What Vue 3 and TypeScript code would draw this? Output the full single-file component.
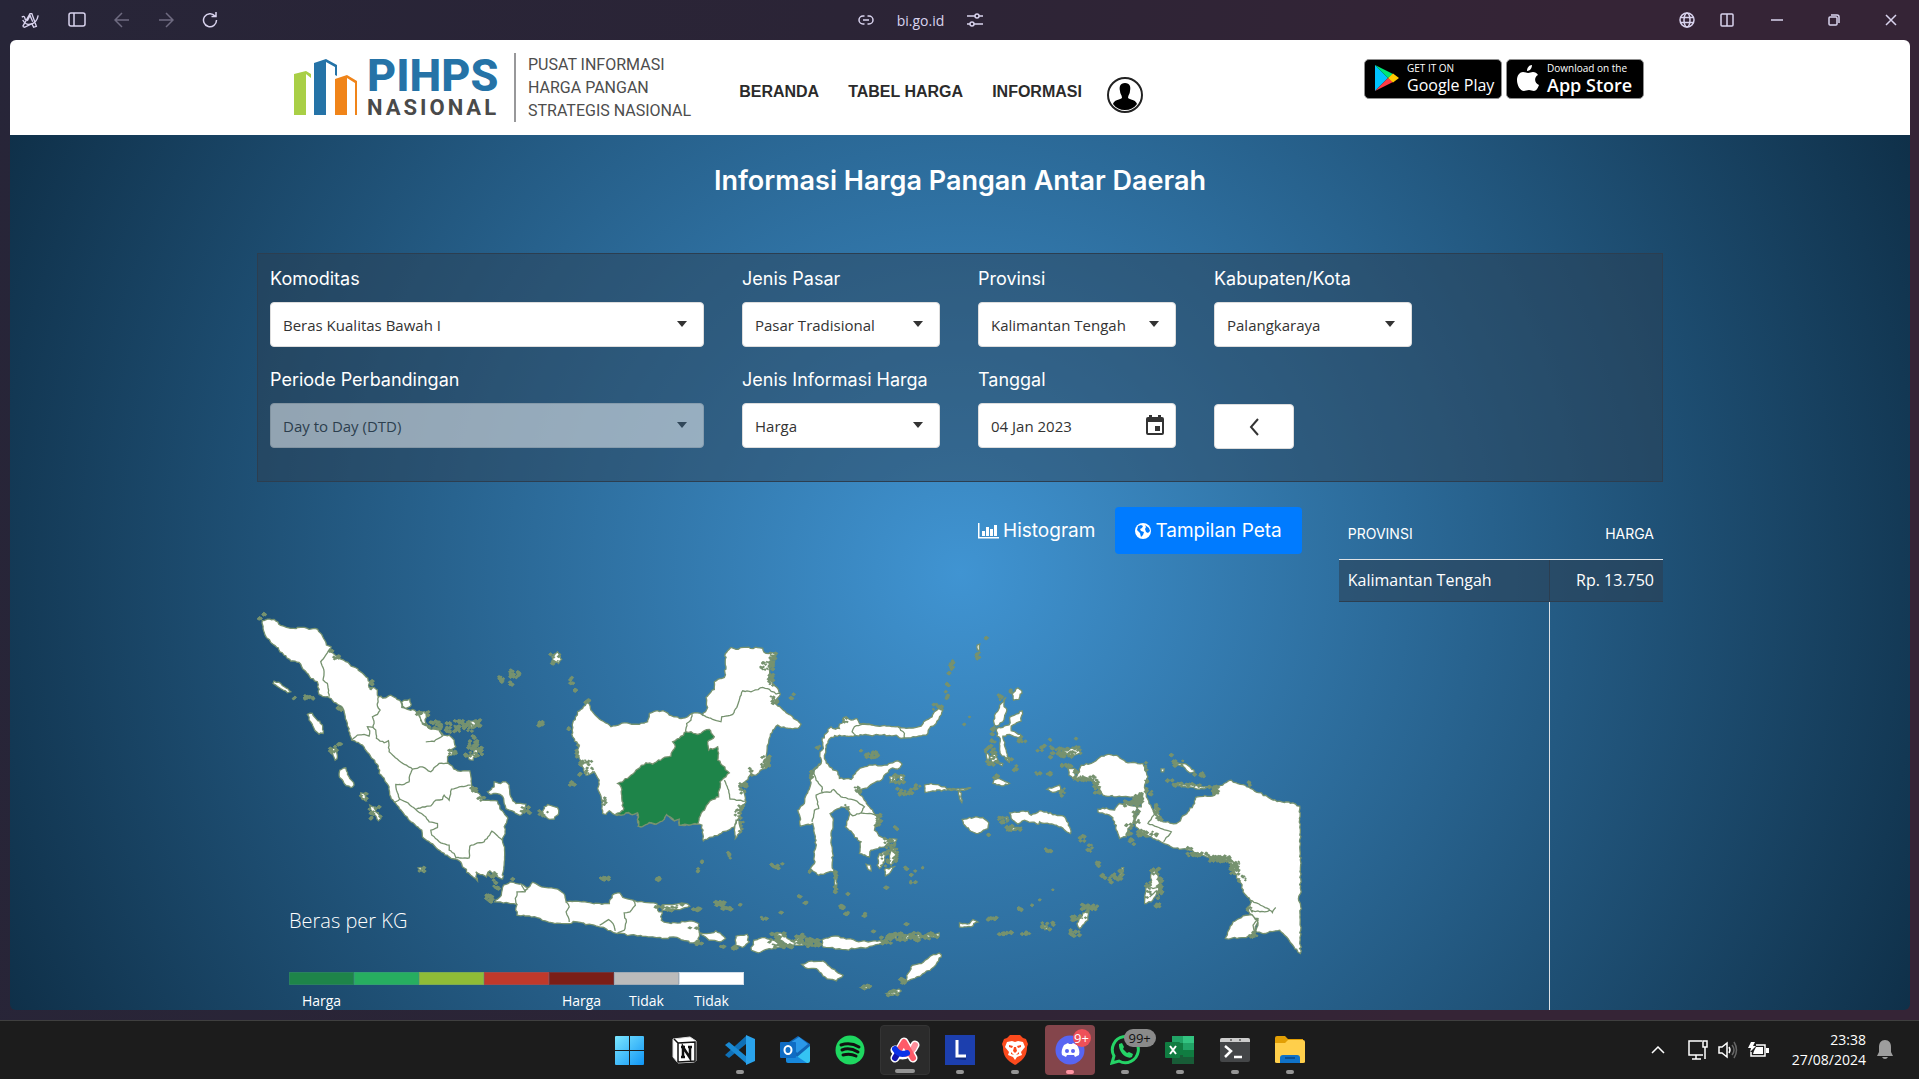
<script setup lang="ts">
import { ref } from 'vue'

interface Layer {
  transform: string
  land: string[]
  borders: string[]
  specks: number[][]
}

const komoditas = ref('Beras Kualitas Bawah I')
const pasar = ref('Pasar Tradisional')
const provinsi = ref('Kalimantan Tengah')
const kota = ref('Palangkaraya')
const periode = ref('Day to Day (DTD)')
const informasi = ref('Harga')
const tanggal = ref('04 Jan 2023')

const legend = [
  { color: '#1e8449', label: 'Harga' },
  { color: '#27ae60', label: '' },
  { color: '#8fbc37', label: '' },
  { color: '#c0392b', label: '' },
  { color: '#7b1e17', label: 'Harga' },
  { color: '#bbbbbb', label: 'Tidak' },
  { color: '#ffffff', label: 'Tidak' },
]

// Deterministic noise keeps the coastline identical between renders
let seed = 7
function noise(): number {
  seed = (seed * 16807) % 2147483647
  return seed / 2147483647
}

function trace(points: string, closed: boolean, rough = 2.6): string {
  const p = points.split(' ').map((s) => s.split(',').map(Number))
  if (closed) p.push(p[0])
  let d = `M${p[0][0]} ${p[0][1]}`
  for (let i = 1; i < p.length; i++) {
    const [ax, ay] = p[i - 1]
    const [bx, by] = p[i]
    const steps = Math.max(1, Math.round(Math.hypot(bx - ax, by - ay) / 7))
    for (let s = 1; s <= steps; s++) {
      const t = s / steps
      const k = s === steps ? 0 : rough
      const x = ax + (bx - ax) * t + (noise() - 0.5) * 2 * k
      const y = ay + (by - ay) * t + (noise() - 0.5) * 2 * k
      d += `L${x.toFixed(1)} ${y.toFixed(1)}`
    }
  }
  return closed ? d + 'Z' : d
}

// Each cluster: centre x, centre y, spread x, spread y, islet count
function scatter(clusters: number[][]): string {
  let d = ''
  for (const [cx, cy, rx, ry, n] of clusters) {
    for (let i = 0; i < n; i++) {
      const x = cx + (noise() - 0.5) * 2 * rx
      const y = cy + (noise() - 0.5) * 2 * ry
      const r = 3 + noise() * 3
      d += `M${(x - r).toFixed(1)} ${y.toFixed(1)}l${r.toFixed(1)} ${(-r).toFixed(1)}l${(r * 1.3).toFixed(1)} ${(r * 0.8).toFixed(1)}l${(-r).toFixed(1)} ${(r * 1.1).toFixed(1)}Z`
    }
  }
  return d
}

const source: Layer[] = [
  {
    transform: 'translate(250 600) scale(.33333)',
    land: [
      '40,62 55,57 75,58 95,76 125,85 160,82 185,87 198,85 215,100 228,122 232,135 246,140 243,155 265,170 290,185 320,203 350,230 362,245 360,262 375,262 385,270 388,290 410,293 425,285 440,293 455,305 458,322 475,328 490,328 510,345 520,372 540,385 570,390 582,405 600,405 615,420 620,440 600,450 620,460 595,470 595,485 600,492 625,512 662,512 667,550 670,572 690,580 700,600 745,603 752,625 765,640 776,655 765,680 768,700 760,720 766,750 760,836 745,830 722,812 712,830 680,815 685,842 665,825 640,800 628,780 600,770 560,742 520,710 518,690 480,660 460,635 435,605 425,590 420,560 400,530 390,520 388,498 350,450 340,435 308,420 295,370 285,335 280,322 240,293 210,283 205,245 185,235 150,187 125,183 90,150 52,112 42,85',
      '458,306 465,300 482,297 486,315 470,325 460,318',
      '505,335 530,338 532,352 528,362 538,378 520,368',
      '715,575 735,560 735,545 750,550 770,545 780,555 785,590 800,610 830,612 820,640 810,645 795,635 770,625 765,610 760,588 740,580 725,583',
      '885,620 895,613 925,622 928,640 915,657 895,655 880,645',
      '175,343 190,340 200,355 220,375 222,400 210,402 195,385 185,365',
      '75,243 95,250 125,275 115,278 90,262 72,250',
      '272,510 290,503 300,530 315,555 305,562 285,550 270,525',
      '250,445 260,445 265,470 258,480 252,465',
      '335,578 345,580 352,602 340,595',
      '362,615 375,620 380,635 395,655 388,662 370,635',
      '507,803 525,805 525,815 512,810',
      '908,170 925,155 937,178 928,190 910,182',
      '660,362 678,360 680,380 668,385',
      '655,468 672,462 675,450 690,445 672,480 660,478',
    ],
    borders: [
      '243,145 230,165 215,185 225,215 222,240 235,250 240,290',
      '388,290 385,318 393,330 385,343 370,350 375,370 372,382',
      '308,420 325,405 345,403 360,408 362,392 355,380 372,382',
      '372,382 380,390 382,415 405,428 418,422 420,455 450,482 490,507',
      '490,507 520,500 545,515 570,490 600,490',
      '490,507 482,525 480,545 465,553 440,553 442,570 452,597 435,607',
      '452,597 470,605 500,628 520,620 545,617 560,600 580,598 585,585 600,600 607,567 630,560 665,555',
      '500,628 530,650 540,665 565,670 565,682 545,690 548,705 575,728 600,735 600,750 615,760 620,772 660,773 662,738 685,728 705,725 728,693 760,720',
      '530,425 555,424 580,408 570,392',
    ],
    specks: [
      [43, 42, 5, 4, 4], [32, 53, 4, 5, 3], [245, 148, 6, 8, 5], [265, 173, 14, 5, 8],
      [365, 255, 6, 14, 6], [180, 292, 13, 8, 10], [135, 294, 4, 4, 3], [268, 327, 12, 4, 6],
      [252, 450, 10, 12, 8], [272, 431, 9, 2, 4], [345, 590, 10, 12, 7], [378, 640, 18, 20, 12],
      [795, 220, 14, 15, 20], [755, 237, 9, 9, 9], [787, 250, 6, 4, 3], [917, 180, 15, 20, 12],
      [555, 375, 22, 12, 18], [598, 382, 8, 18, 14], [640, 378, 30, 16, 44], [680, 372, 13, 13, 12],
      [670, 428, 14, 22, 22], [682, 455, 20, 14, 16], [655, 468, 8, 8, 6], [610, 460, 12, 10, 9],
      [672, 568, 10, 8, 9], [695, 597, 12, 5, 8], [875, 372, 7, 5, 5], [830, 632, 16, 12, 10],
      [880, 640, 16, 12, 9], [520, 340, 18, 7, 8], [730, 822, 14, 8, 8], [735, 850, 6, 12, 4],
      [720, 890, 10, 6, 7], [516, 808, 8, 6, 5], [790, 842, 5, 5, 2],
    ],
  },
  {
    transform: 'translate(480 620) scale(.33333)',
    land: [
      '320,248 330,252 335,270 360,297 395,320 435,308 480,313 505,305 510,280 535,272 558,275 570,285 600,295 625,290 638,280 655,278 670,285 685,262 680,232 705,208 705,185 715,178 735,172 740,140 738,100 745,92 755,82 770,88 800,82 850,85 860,100 880,98 890,105 870,125 870,150 870,180 890,200 903,222 890,240 890,252 965,312 955,325 905,322 895,315 880,330 868,365 862,400 860,440 830,465 815,460 800,482 778,497 795,520 800,545 785,560 780,590 765,620 720,642 672,662 668,615 652,612 600,615 600,597 585,602 562,583 555,597 530,612 510,607 485,620 477,618 475,578 465,582 440,578 425,585 405,583 390,572 380,583 370,580 370,545 355,505 360,480 345,455 320,465 310,440 300,415 295,390 300,378 280,350 280,310 295,275 310,265',
      '770,600 780,605 785,635 768,655 765,630',
    ],
    borders: [
      '638,280 635,300 622,310 620,335',
      '670,285 700,298 725,305 727,290 760,283 775,255 790,212 815,215 850,202 870,208 890,222 903,220',
      '735,480 748,510 752,537 798,543',
      '372,545 380,540 376,555 368,552',
    ],
    specks: [
      [862, 138, 20, 12, 30], [882, 112, 12, 16, 16], [874, 178, 8, 18, 18], [885, 240, 11, 11, 20],
      [858, 425, 12, 16, 34], [790, 505, 11, 15, 16], [778, 575, 12, 18, 14], [785, 615, 6, 22, 9],
      [320, 428, 18, 8, 18], [330, 452, 12, 8, 8], [278, 490, 12, 6, 7], [302, 465, 4, 4, 2],
      [277, 182, 5, 10, 4], [287, 210, 8, 3, 4], [325, 245, 7, 7, 6], [267, 325, 3, 3, 2],
      [938, 228, 5, 8, 4], [185, 311, 6, 5, 4], [295, 395, 5, 20, 6], [812, 455, 5, 10, 6],
      [748, 705, 7, 10, 5], [656, 752, 4, 7, 3], [668, 727, 2, 4, 2], [375, 774, 13, 4, 5],
      [536, 774, 6, 4, 4], [877, 735, 2, 2, 1], [896, 746, 3, 3, 2], [910, 730, 2, 2, 1], [375, 545, 6, 12, 6],
    ],
  },
  {
    transform: 'translate(770 620) scale(.33333)',
    land: [
      '520,270 508,265 495,275 488,290 470,300 455,318 440,322 410,325 380,320 350,318 310,315 270,310 262,295 245,300 230,290 222,293 225,305 210,312 210,325 190,325 185,320 170,340 158,362 162,385 152,395 155,430 135,450 125,465 122,500 108,530 105,550 85,570 92,590 93,618 130,610 135,640 140,660 135,700 135,730 123,745 148,765 170,758 192,755 188,735 190,700 185,660 192,600 182,580 215,560 238,560 240,585 232,610 228,620 250,640 265,660 275,665 270,700 300,710 305,690 345,680 360,665 335,650 315,630 318,615 330,595 315,580 300,560 290,545 265,515 285,505 310,490 335,480 350,460 365,445 385,447 398,432 385,422 370,428 345,435 310,435 280,442 260,455 245,478 210,475 205,455 180,440 165,415 170,375 185,352 210,345 245,348 280,345 330,345 380,345 395,355 440,350 470,345 480,325 500,310 510,290',
      '330,700 350,695 345,725 330,745 323,735',
      '362,688 380,685 380,705 365,735 358,720',
      '345,748 378,738 360,760 348,767',
      '290,732 303,735 305,752 296,748',
      '197,755 203,790 199,820 195,785',
      '360,470 378,462 378,480 362,487',
      '386,466 403,468 402,485 392,480',
      '465,495 485,490 520,500 545,507 605,503 575,510 530,510 490,512 467,517',
      '567,515 572,515 577,547 570,535',
      '578,598 600,592 640,592 658,608 655,625 625,640 600,630 582,612',
      '368,655 382,657 378,666 368,664',
      '623,75 631,72 630,90 624,90',
      '540,128 548,145 545,148',
    ],
    borders: [
      '385,320 405,340 405,355',
      '310,315 280,312 255,320 248,335 258,345',
      '155,430 130,450 140,480 158,500 158,518 140,525 148,565 135,570 128,605',
      '158,518 185,515 193,508 215,530 255,540 285,560 275,578 250,587 240,580',
      '275,578 300,580 320,585',
    ],
    specks: [
      [303, 405, 24, 9, 22], [275, 391, 3, 3, 2], [385, 478, 22, 14, 18], [405, 515, 26, 12, 18],
      [445, 500, 12, 7, 7], [262, 510, 10, 9, 12], [325, 600, 9, 18, 16], [355, 670, 20, 14, 14],
      [358, 710, 24, 28, 24], [378, 705, 6, 20, 10], [410, 745, 6, 4, 3], [432, 770, 9, 18, 7],
      [378, 624, 6, 4, 3], [543, 135, 8, 14, 8], [541, 160, 4, 3, 2], [535, 195, 5, 6, 4],
      [532, 222, 4, 14, 4], [624, 108, 6, 15, 8], [649, 57, 3, 3, 2], [505, 262, 14, 9, 10],
      [198, 775, 4, 26, 8], [198, 815, 4, 10, 4], [145, 385, 6, 8, 4], [128, 465, 6, 14, 7],
      [25, 740, 20, 10, 4], [118, 755, 3, 3, 2], [462, 743, 3, 3, 2], [601, 290, 2, 2, 1],
      [584, 313, 2, 2, 1], [348, 802, 2, 2, 1], [87, 828, 2, 2, 1], [233, 823, 2, 2, 1],
      [225, 300, 8, 8, 6], [655, 642, 4, 4, 3], [235, 562, 8, 8, 4],
    ],
  },
  {
    transform: 'translate(960 620) scale(.33333)',
    land: [
      '345,478 360,455 365,435 395,430 425,408 445,403 470,405 505,428 550,430 555,450 565,470 555,495 560,530 575,560 582,575 586,550 592,575 600,588 610,605 650,610 685,575 705,550 708,532 765,525 775,500 800,487 815,480 830,488 880,508 940,540 1000,548 1020,558 1022,700 1022,820 1016,835 1022,850 1022,1000 985,955 960,930 910,940 890,935 895,895 870,880 865,860 875,845 850,815 845,790 825,760 820,735 790,715 740,710 690,690 640,683 610,668 575,650 540,635 528,620 525,600 540,575 530,560 545,560 550,520 520,530 470,530 430,525 415,500 405,485 375,470',
      '500,550 480,550 465,570 440,563 415,567 415,575 450,585 465,605 470,630 480,655 500,650 505,625 520,610 525,580 535,560',
      '797,955 810,925 820,905 850,887 878,885 895,900 885,935 860,952',
      '645,490 690,493 745,500 720,507 670,500',
      '645,428 665,430 680,432 705,455 690,458 672,440',
      '150,578 205,573 215,585 240,572 285,583 315,590 330,620 333,640 290,615 240,605 238,612 195,600 175,612 160,600',
      '158,222 175,203 187,212 178,238 162,240',
      '140,232 125,250 120,262 105,285 103,308 112,318 130,305 142,270 133,252',
      '188,272 165,285 150,292 152,308 130,322 112,325 112,348 122,355 122,400 150,428 140,390 132,360 130,348 150,343 185,355 183,343 155,332 155,318 185,303',
      '90,410 108,402 115,420 100,428', '80,398 90,410 83,425', '118,430 130,430 128,437',
      '103,480 118,475 150,490 125,497 100,490',
      '262,508 285,500 300,495 303,510 280,517',
      '308,390 325,392 345,382 365,398 345,405 320,402',
      '325,445 345,445 347,470 340,475 328,465',
      '575,758 590,750 598,775 600,805 575,845 555,850 558,805 575,795',
      '370,878 388,872 385,900 360,925 352,910',
      '487,742 492,742 485,768 478,780',
      '0,908 30,910 40,898 55,905 35,920 0,920',
      '250,918 262,912 266,925 256,928',
      '135,592 145,592 142,605',
      '140,632 160,622 188,622 165,630',
      '604,446 614,446 612,455 605,455',
      '125,938 150,938 140,942',
    ],
    borders: [
      '590,575 565,610 635,635 612,665',
      '865,862 880,872 915,875 930,870 938,877 948,862',
      '870,840 890,848 910,858 930,868',
      '895,895 880,915 885,935 875,950 888,950',
      '560,790 580,805 598,800', '570,830 590,812 600,830',
    ],
    specks: [
      [535, 535, 14, 16, 44], [510, 550, 22, 9, 24], [380, 475, 28, 7, 26], [412, 500, 10, 20, 20],
      [560, 640, 32, 9, 30], [508, 630, 10, 18, 12], [530, 590, 9, 20, 14], [515, 665, 10, 8, 6],
      [715, 702, 32, 6, 24], [780, 716, 34, 8, 50], [825, 742, 13, 20, 44], [845, 775, 12, 8, 8],
      [768, 512, 10, 10, 18], [870, 492, 5, 5, 3], [590, 565, 7, 22, 12], [598, 598, 10, 8, 8],
      [655, 430, 15, 8, 10], [718, 464, 16, 8, 9], [680, 495, 40, 6, 18], [630, 482, 10, 3, 5],
      [760, 503, 16, 4, 8], [560, 500, 4, 20, 6], [573, 520, 5, 8, 4],
      [320, 398, 22, 14, 26], [290, 390, 18, 12, 10], [350, 390, 14, 10, 10], [320, 437, 16, 5, 12],
      [348, 465, 6, 14, 10], [268, 360, 5, 5, 2], [348, 353, 3, 3, 1], [242, 384, 12, 8, 7],
      [250, 461, 25, 4, 9], [308, 515, 10, 14, 8], [270, 410, 4, 4, 2], [100, 340, 6, 28, 12],
      [95, 395, 18, 18, 16], [100, 425, 18, 10, 10], [125, 232, 10, 8, 6], [150, 215, 4, 6, 3],
      [190, 358, 14, 8, 6], [150, 420, 10, 6, 5], [165, 445, 8, 12, 7], [112, 470, 12, 10, 7],
      [128, 600, 18, 9, 12], [165, 625, 26, 8, 18], [367, 655, 9, 9, 8], [390, 690, 8, 16, 6],
      [413, 735, 5, 10, 4], [265, 690, 14, 4, 6], [432, 765, 8, 9, 6], [463, 775, 14, 14, 14],
      [484, 760, 5, 18, 9], [585, 755, 12, 10, 14], [600, 805, 8, 32, 26], [565, 815, 8, 30, 14],
      [588, 855, 12, 6, 6], [375, 870, 10, 28, 14], [348, 895, 15, 8, 12], [345, 938, 14, 10, 14],
      [400, 862, 13, 8, 9], [98, 897, 14, 5, 8], [135, 939, 22, 4, 14], [198, 939, 14, 3, 7],
      [258, 920, 12, 12, 10], [280, 910, 4, 6, 3], [182, 868, 6, 6, 6], [242, 840, 3, 3, 2],
      [218, 856, 2, 2, 1], [278, 810, 2, 2, 1], [245, 918, 4, 4, 2], [870, 865, 12, 10, 8],
      [880, 942, 12, 9, 10], [690, 685, 9, 4, 6], [560, 440, 3, 12, 4], [636, 407, 2, 3, 2],
    ],
  },
  {
    transform: 'translate(270 860) scale(.44643 .33333)',
    land: [
      '525,75 540,65 570,75 580,82 590,66 610,80 640,85 660,100 665,125 700,125 745,132 762,130 768,105 785,98 792,112 815,120 825,125 868,130 870,150 880,155 878,180 900,190 945,182 962,190 962,240 950,248 905,230 880,235 780,220 740,200 690,185 660,190 640,190 600,172 555,165 552,150 555,133 540,130 505,125 520,105',
      '880,135 935,130 942,138 920,148 880,150',
      '965,218 980,220 1000,212 1022,235 1010,245 985,240',
      '1045,228 1070,222 1075,245 1060,262 1045,255',
      '1085,240 1110,232 1130,240 1150,260 1120,265 1095,278 1080,270',
      '1130,220 1145,218 1160,235 1175,245 1190,230 1195,255 1160,256',
      '1238,238 1260,228 1300,235 1320,245 1370,240 1385,245 1340,262 1290,268 1240,260',
      '1470,225 1500,218 1500,228 1475,232',
      '1192,312 1215,302 1240,302 1260,325 1285,345 1270,362 1245,350 1225,325 1200,322',
      '1500,278 1505,290 1480,330 1450,350 1425,365 1430,340 1440,315 1460,310 1480,288',
      '1382,400 1410,386 1415,392 1395,405', '1325,382 1342,378 1338,385',
      '1398,228 1408,222 1404,238', '1425,228 1432,222 1428,240', '1450,225 1458,220 1456,238',
      '868,52 874,50 874,58',
    ],
    borders: [
      '580,82 573,95 555,95 552,120 555,133',
      '665,125 672,140 665,155 672,185',
      '815,120 820,135 808,155 795,158 800,185 795,210 780,218',
      '740,195 760,178 770,190 775,212',
      '565,75 572,90 580,85',
    ],
    specks: [
      [492, 115, 7, 12, 9], [512, 80, 4, 6, 3], [895, 143, 30, 10, 16], [962, 147, 14, 3, 6],
      [1008, 130, 9, 6, 12], [1025, 145, 9, 5, 7], [1050, 134, 5, 3, 2], [752, 57, 9, 6, 4],
      [872, 54, 4, 6, 3], [962, 250, 6, 8, 5], [1015, 258, 6, 4, 3], [1040, 262, 5, 6, 4],
      [1135, 238, 18, 20, 28], [1185, 240, 14, 18, 20], [1215, 250, 18, 14, 28], [1150, 258, 20, 6, 14],
      [1380, 238, 12, 12, 18], [1405, 230, 20, 12, 26], [1440, 230, 22, 12, 26], [1480, 228, 18, 8, 12],
      [1335, 380, 10, 5, 7], [1395, 398, 16, 8, 12], [1418, 362, 6, 8, 6], [1108, 174, 7, 3, 4],
      [1147, 158, 2, 2, 1], [1200, 126, 3, 3, 2], [1278, 142, 6, 6, 5], [1295, 160, 8, 4, 5],
      [1333, 160, 2, 8, 3], [1427, 191, 2, 2, 1], [1186, 108, 2, 2, 1], [1380, 82, 2, 2, 1],
      [950, 205, 10, 8, 3], [1350, 214, 3, 2, 1],
    ],
  },
]

const layers = source.map((l) => ({
  transform: l.transform,
  land: l.land.map((s) => trace(s, true)).join(''),
  borders: l.borders.map((s) => trace(s, false, 1.5)).join(''),
  specks: scatter(l.specks),
}))

const kalteng = trace(
  '620,335 635,335 655,343 670,335 690,328 705,350 685,365 688,390 715,380 718,400 715,420 750,458 740,470 722,485 718,530 690,545 665,580 652,612 600,615 600,597 585,602 562,583 555,597 530,612 510,607 485,620 477,618 475,578 465,582 440,578 425,585 410,582 432,570 425,500 415,490 445,475 470,450 500,428 520,432 550,415 575,408 578,395 588,380 580,365 600,355',
  true,
)
</script>

<template>
  <div class="desktop">
    <header class="chrome">
      <div class="group left">
        <button aria-label="Menu"><svg width="20" height="20" viewBox="0 0 22 22"><path d="M2 8c2-2 3-1 4 3M3 18l8-14h2l5 14-3 1-2-4c-4 2-8 0-10-4M20 6c-1 6-4 9-9 10l-6 3-2-1M8 12l3-6 3 7" /></svg></button>
        <button aria-label="Sidebar"><svg width="18" height="16" viewBox="0 0 18 16"><rect x="1" y="1" width="16" height="13" rx="2" /><path d="M6 1v13" /></svg></button>
        <button aria-label="Back" class="dim"><svg width="16" height="16" viewBox="0 0 16 16"><path d="M15 8H1M8 1 1 8l7 7" /></svg></button>
        <button aria-label="Forward" class="dim"><svg width="16" height="16" viewBox="0 0 16 16"><path d="M1 8h14M8 1l7 7-7 7" /></svg></button>
        <button aria-label="Reload"><svg width="16" height="16" viewBox="0 0 16 16"><path d="M13 4a6.500 6.500 0 1 0 1.500 4M14 0v4.500H9.500" /></svg></button>
      </div>
      <div class="group address">
        <button aria-label="Copy link"><svg width="16" height="16" viewBox="0 0 16 16"><path d="M6.500 4H5a4 4 0 0 0 0 8h1.500M9.500 4H11a4 4 0 0 1 0 8H9.500M5 8h6" /></svg></button>
        <span>bi.go.id</span>
        <button aria-label="Site controls"><svg width="16" height="16" viewBox="0 0 16 16"><path d="M0 4h8M12 4h4M0 12h3M7 12h9" /><circle cx="10" cy="4" r="2" /><circle cx="5" cy="12" r="2" /></svg></button>
      </div>
      <div class="group right">
        <button aria-label="Translate"><svg width="16" height="16" viewBox="0 0 16 16"><circle cx="8" cy="8" r="7" /><ellipse cx="8" cy="8" rx="3" ry="7" /><path d="M1.500 5.500h13M1.500 10.500h13" /></svg></button>
        <button aria-label="Split view"><svg width="14" height="14" viewBox="0 0 14 14"><rect x="1" y="1" width="12" height="12" rx="1" /><path d="M7 1v12" /></svg></button>
        <button aria-label="Minimize"><svg width="12" height="12" viewBox="0 0 12 12"><path d="M0 6h12" /></svg></button>
        <button aria-label="Restore"><svg width="12" height="12" viewBox="0 0 12 12"><rect x="1" y="3" width="8" height="8" rx="1" /><path d="M3 1h6a2 2 0 0 1 2 2v6" /></svg></button>
        <button aria-label="Close"><svg width="12" height="12" viewBox="0 0 12 12"><path d="m1 1 10 10M11 1 1 11" /></svg></button>
      </div>
    </header>

    <div class="window">
      <nav class="navbar">
        <div class="container bar">
          <a href="#" class="brand">
            <svg width="64" height="56" viewBox="0 0 64 56">
              <path fill="#a9cf46" d="M0 15l12-3v44H0zM12 12l5 3v4l-5-4z" />
              <path fill="#2573a7" d="M20 4l12-4v56H20zM32 0l11 6v11l-2-1V8l-9-5z" />
              <path fill="#f08419" d="M41 20l12-4v40H41zM53 16l10 6v34h-2V24l-8-5z" />
            </svg>
            <span class="wordmark"><b>PIHPS</b><i>NASIONAL</i></span>
            <span class="tagline">PUSAT INFORMASI<br />HARGA PANGAN<br />STRATEGIS NASIONAL</span>
          </a>
          <div class="links">
            <a href="#">BERANDA</a>
            <a href="#">TABEL HARGA</a>
            <a href="#">INFORMASI</a>
            <a href="#" class="user" aria-label="Akun"><svg width="36" height="36" viewBox="0 0 36 36"><circle cx="18" cy="18" r="17" fill="#fff" stroke="#222" stroke-width="2" /><path d="M18 6c5 0 6 4 5 8 0 3-2 4-2 7 3 2 8 2 9 6-3 4-7 6-12 6s-9-2-12-6c1-4 6-4 9-6 0-3-2-4-2-7-1-4 0-8 5-8z" /></svg></a>
          </div>
          <div class="stores">
            <a href="#" class="store">
              <svg width="24" height="28" viewBox="0 0 24 28"><path fill="#00c3ff" d="M0 1v26l13-13z" /><path fill="#00e676" d="M0 1l18 9-5 4z" /><path fill="#ff3a44" d="M0 27l18-9-5-4z" /><path fill="#ffc900" d="M18 9.500l6 4.500-6 4.500-5-4.500z" /></svg>
              <span><small>GET IT ON</small><strong class="google">Google Play</strong></span>
            </a>
            <a href="#" class="store">
              <svg width="22" height="27" viewBox="0 0 22 27"><path fill="#fff" d="M15 0c0 3-2 6-5 6 0-3 2-6 5-6zM11 8c2 0 3-1 5-1 2 0 4 1 5 3-4 2-4 8 1 10-1 3-3 6-5 6s-3-1-5-1-4 1-5 1C3 26 0 20 0 15c0-5 3-8 6-8 2 0 3 1 5 1z" /></svg>
              <span><small>Download on the</small><strong>App Store</strong></span>
            </a>
          </div>
        </div>
      </nav>

      <main class="page">
        <div class="container">
          <h1>Informasi Harga Pangan Antar Daerah</h1>

          <form class="filters" @submit.prevent>
            <div class="field">
              <label for="komoditas">Komoditas</label>
              <div class="control">
                <select id="komoditas" v-model="komoditas"><option>Beras Kualitas Bawah I</option></select>
                <svg class="caret" width="10" height="6" viewBox="0 0 10 6"><path d="M0 0h10L5 6z" /></svg>
              </div>
            </div>
            <div class="field">
              <label for="pasar">Jenis Pasar</label>
              <div class="control">
                <select id="pasar" v-model="pasar"><option>Pasar Tradisional</option></select>
                <svg class="caret" width="10" height="6" viewBox="0 0 10 6"><path d="M0 0h10L5 6z" /></svg>
              </div>
            </div>
            <div class="field">
              <label for="provinsi">Provinsi</label>
              <div class="control">
                <select id="provinsi" v-model="provinsi"><option>Kalimantan Tengah</option></select>
                <svg class="caret" width="10" height="6" viewBox="0 0 10 6"><path d="M0 0h10L5 6z" /></svg>
              </div>
            </div>
            <div class="field">
              <label for="kota">Kabupaten/Kota</label>
              <div class="control">
                <select id="kota" v-model="kota"><option>Palangkaraya</option></select>
                <svg class="caret" width="10" height="6" viewBox="0 0 10 6"><path d="M0 0h10L5 6z" /></svg>
              </div>
            </div>
            <div class="field first">
              <label for="periode">Periode Perbandingan</label>
              <div class="control disabled">
                <select id="periode" v-model="periode" disabled><option>Day to Day (DTD)</option></select>
                <svg class="caret" width="10" height="6" viewBox="0 0 10 6"><path d="M0 0h10L5 6z" /></svg>
              </div>
            </div>
            <div class="field">
              <label for="informasi">Jenis Informasi Harga</label>
              <div class="control">
                <select id="informasi" v-model="informasi"><option>Harga</option></select>
                <svg class="caret" width="10" height="6" viewBox="0 0 10 6"><path d="M0 0h10L5 6z" /></svg>
              </div>
            </div>
            <div class="field">
              <label for="tanggal">Tanggal</label>
              <div class="control">
                <input id="tanggal" v-model="tanggal" type="text" />
                <button type="button" class="calendar" aria-label="Pilih tanggal"><svg width="18" height="20" viewBox="0 0 18 20"><path fill-rule="evenodd" d="M3 0h3v2h6V0h3v2h1a2 2 0 0 1 2 2v14a2 2 0 0 1-2 2H2a2 2 0 0 1-2-2V4a2 2 0 0 1 2-2h1zM2 7v11h14V7zM9 11h5v5H9z" /></svg></button>
              </div>
            </div>
            <button type="button" class="back" aria-label="Sebelumnya"><svg width="10" height="18" viewBox="0 0 10 18"><path d="M9 1 2 9l7 8" fill="none" stroke="#333" stroke-width="2" /></svg></button>
          </form>

          <div class="results">
            <section>
              <div class="tabs">
                <button type="button">
                  <svg width="21" height="16" viewBox="0 0 21 16"><path d="M0 0h1.500v14H21v1.500H0zM4 8h3v5H4zM8 4h3v9H8zM12 6h3v7h-3zM16 2h3v11h-3z" /></svg>
                  Histogram
                </button>
                <button type="button" class="active">
                  <svg width="16" height="16" viewBox="0 0 16 16"><circle cx="8" cy="8" r="8" /><path fill="#007bff" d="M3 3l3-1 2 1-1 2-2 1 1 2 3 1-1 3-2 2-1-4-3-3zM10 2l4 3 1 3-2 2-2-1-1-3 1-2z" /></svg>
                  Tampilan Peta
                </button>
              </div>
              <div class="map">
                <svg viewBox="258 554 1044 456" role="img" aria-label="Peta Indonesia">
                  <g v-for="(layer, i) in layers" :key="i" :transform="layer.transform">
                    <path class="specks" :d="layer.specks" />
                    <path class="land" :d="layer.land" />
                    <path v-if="i === 1" class="active-area" :d="kalteng" />
                    <path class="border" :d="layer.borders" />
                    <path class="specks inner" :d="layer.specks" />
                  </g>
                </svg>
                <div class="legend">
                  <h2>Beras per KG</h2>
                  <ul>
                    <li v-for="(item, i) in legend" :key="i">
                      <i :style="{ background: item.color }"></i>{{ item.label }}
                    </li>
                  </ul>
                </div>
              </div>
            </section>
            <aside>
              <table>
                <thead><tr><th>PROVINSI</th><th class="num">HARGA</th></tr></thead>
                <tbody><tr><td>Kalimantan Tengah</td><td class="num">Rp. 13.750</td></tr></tbody>
              </table>
              <div class="rule"></div>
            </aside>
          </div>
        </div>
      </main>
    </div>

    <footer class="taskbar">
      <div class="apps">
        <button aria-label="Start"><svg width="30" height="30" viewBox="0 0 30 30"><defs><linearGradient id="win" x1="0" y1="0" x2="1" y2="1"><stop stop-color="#7be6ff" /><stop offset="1" stop-color="#1095f5" /></linearGradient></defs><path fill="url(#win)" d="M0 2q0-1 1-1h13v14H0zM15 1h13q1 0 1 1v13H15zM0 16h14v14H1q-1 0-1-1zM15 16h14v13q0 1-1 1H15z" /></svg></button>
        <button aria-label="Notion"><svg width="26" height="28" viewBox="0 0 26 28"><path fill="#fff" stroke="#ddd" d="M1 3 18 1l6 4v20l-2 1-16 1-5-6z" /><path fill="#fff" stroke="#111" stroke-width="1.500" d="M2 3l4 4v18M6 7l17-1v19L6 26z" /><path fill="none" stroke="#111" stroke-width="2.500" d="M11 21V11l7 11V11M9 11h4M9 21h4M16 11h4" /></svg></button>
        <button aria-label="Visual Studio Code" class="open"><svg width="30" height="30" viewBox="0 0 30 30"><path fill="#0f70b7" d="M0 20 21 1v8L4 23z" /><path fill="#1a8ad4" d="M0 10l4-3 18 15v7z" /><path fill="#2aa3ec" d="M21 0l9 4v22l-9 4z" /></svg></button>
        <button aria-label="Outlook"><svg width="30" height="28" viewBox="0 0 30 28"><path fill="#1164b4" d="M6 8 18 0l12 8v14H6z" /><path fill="#2b98e8" d="M10 7l9-6 9 7-11 9z" /><path fill="#35c3f3" d="M30 10v15q0 2-2 2H10z" /><path fill="#1788dc" d="M6 13l21 14H8q-2 0-2-2z" /><rect y="6" width="16" height="16" rx="1" fill="#0f6cc4" /><ellipse cx="8" cy="14" rx="3.500" ry="4" fill="none" stroke="#fff" stroke-width="2" /></svg></button>
        <button aria-label="Spotify"><svg width="30" height="30" viewBox="0 0 30 30"><circle cx="15" cy="15" r="14.500" fill="#1ed760" /><path fill="none" stroke="#111" stroke-linecap="round" stroke-width="3" d="M6 10c6-2 13-1 18 2M7 15c5-2 11-1 16 2M8 20c4-1 9-1 13 1" /></svg></button>
        <button aria-label="Arc" class="open current"><svg width="30" height="26" viewBox="0 0 30 26"><g fill="none" stroke-linecap="round" stroke-linejoin="round"><path stroke="#fff" stroke-width="9" d="M5 21 14 5l9 16M5 13c5 8 15 6 20-5" /><path stroke="#ff8f9c" stroke-width="6" d="M25 8c-2 5-5 8-9 9" /><path stroke="#1014b0" stroke-width="6" d="M5 21l3-5" /><path stroke="#ff5a68" stroke-width="6" d="M9 13l5-8 9 16" /><path stroke="#0a32e8" stroke-width="6" d="M5 12c3 5 7 6 12 4" /></g></svg></button>
        <button aria-label="L" class="open"><svg width="30" height="30" viewBox="0 0 30 30"><path fill="#1c3fae" d="M0 0h30v30H0z" /><path fill="#102a80" d="M10 24l3-2h8v3z" /><path fill="none" stroke="#fff" stroke-width="3" d="M12 5v16h9" /></svg></button>
        <button aria-label="Brave" class="open"><svg width="26" height="30" viewBox="0 0 26 30"><path fill="#fb4a1d" d="M8 0h10l3 3 3 1 2 5-1 3c0 8-3 13-12 18C4 25 1 20 1 12L0 9l2-5 3-1z" /><path fill="#fff" d="M5 7l5-1 3 1 3-1 5 1 2 5-4 5 1 3-5 2-2 3-2-3-5-2 1-3-4-5z" /><path fill="#fb4a1d" d="M7 10l4 1-1 2-3-1zM19 10l-4 1 1 2 3-1zM12 12h2l1 4-2 2-2-2zM9 17l3 3-3-1zM17 17l-3 3 3-1z" /></svg></button>
        <button aria-label="Discord" class="open alert"><svg width="30" height="30" viewBox="0 0 30 30"><circle cx="15" cy="15" r="14.500" fill="#5865f2" /><path fill="#fff" d="M9 10l4-2 1 1h3l1-1 4 2c2 3 3 7 2 10l-4 2-1-2h-7l-1 2-4-2c-1-3 0-7 2-10z" /><circle cx="12" cy="16" r="2" fill="#5865f2" /><circle cx="18" cy="16" r="2" fill="#5865f2" /></svg><span class="badge red">9+</span></button>
        <button aria-label="WhatsApp" class="open"><svg width="30" height="30" viewBox="0 0 30 30"><path fill="none" stroke="#25d366" stroke-width="3" d="M2 28l2-7A13 13 0 1 1 9 26z" /><path fill="#25d366" d="M9 9l3-1 2 4-1 2 4 4 2-1 4 2-1 3c-5 3-14-5-13-13z" /></svg><span class="badge grey">99+</span></button>
        <button aria-label="Excel" class="open"><svg width="30" height="28" viewBox="0 0 30 28"><path fill="#21a366" d="M7 0h22v14H7z" /><path fill="#107c41" d="M7 7h11v14H7z" /><path fill="#33c481" d="M18 0h11v7H18z" /><path fill="#185c37" d="M7 19h22v9H7z" /><path fill="#107c41" d="M18 14h11v7H18z" /><rect y="6" width="15" height="16" rx="1" fill="#107c41" /><path stroke="#fff" stroke-width="2" d="M5 10l6 8M11 10l-6 8" /></svg></button>
        <button aria-label="Terminal" class="open"><svg width="30" height="24" viewBox="0 0 30 24"><rect width="30" height="24" rx="2" fill="#444648" /><path fill="#ccc" d="M2 0h26q2 0 2 2v2H0V2q0-2 2-2z" /><path stroke="#222" d="M11 1v2M20 1v2" /><path fill="none" stroke="#fff" stroke-width="2.500" d="M5 8l6 5-6 6M14 19h8" /></svg></button>
        <button aria-label="File Explorer" class="open"><svg width="30" height="28" viewBox="0 0 30 28"><path fill="#e29f05" d="M0 2q0-2 2-2h8l3 3h15v8H0z" /><path fill="#ffcf4b" d="M0 7h10l3-3h15q2 0 2 2v20q0 1-2 1H2q-2 0-2-1z" /><path fill="#0f72c9" d="M5 27v-5q0-3 3-3h14q3 0 3 3v5z" /><path stroke="#0a4f94" stroke-width="2" d="M10 22h10" /></svg></button>
      </div>
      <div class="tray">
        <svg width="14" height="8" viewBox="0 0 14 8"><path d="M1 7l6-6 6 6" /></svg>
        <svg class="net" width="21" height="20" viewBox="0 0 21 20"><path d="M14 1H1v14h14M8 15v4M4 19h9M15 1h4v6h-4zM17 7v12" /></svg>
        <svg class="sound" width="20" height="18" viewBox="0 0 20 18"><path d="M1 6h3l5-4v14l-5-4H1zM11 6q2 3 0 6" /><path class="faint" d="M14 4q4 5 0 10M16 1q5 8 0 16" /></svg>
        <svg class="battery" width="21" height="16" viewBox="0 0 21 16"><path d="M8 3h9v11H3v-4" /><path fill="#fff" stroke="none" d="M8 5h7v7H5l1-3zM18 6h3v5h-3zM3 0h4L5 4h3l-6 6 1-4H0z" /></svg>
        <div class="clock"><span>23:38</span><span>27/08/2024</span></div>
        <svg class="bell" width="16" height="20" viewBox="0 0 16 20"><path d="M8 0c4 0 6 3 6 7v5l2 4H0l2-4V7c0-4 2-7 6-7zM5 17h6q-1 2-3 2t-3-2z" /></svg>
      </div>
    </footer>
  </div>
</template>

<style>
body {
  margin: 0;
  background: #1c1c1c;
}
</style>

<style scoped>
* {
  box-sizing: border-box;
}
.desktop {
  height: 100vh;
  display: flex;
  flex-direction: column;
  overflow: hidden;
  background: linear-gradient(100deg, #272538, #2b2436 40%, #352436 75%);
  font-family: 'Open Sans', sans-serif;
}
button {
  border: 0;
  padding: 0;
  background: none;
  font: inherit;
  color: inherit;
}
a {
  color: inherit;
  text-decoration: none;
}
.chrome {
  height: 40px;
  flex: none;
  display: grid;
  grid-template-columns: 1fr auto 1fr;
  align-items: center;
  padding: 0 22px 0 20px;
  color: #d9d3ee;
}
.group {
  display: flex;
  align-items: center;
}
.group button {
  display: flex;
}
.group svg {
  fill: none;
  stroke: currentColor;
  stroke-width: 1.5;
}
.left {
  gap: 28px;
}
.left .dim {
  opacity: 0.4;
}
.address {
  gap: 23px;
  margin-right: 76px;
  font-size: 14px;
}
.right {
  justify-content: flex-end;
  gap: 45px;
}
.right button:first-child {
  margin-right: -20px;
}
.right button:nth-child(2) {
  margin-right: -8px;
}
.window {
  flex: 1;
  min-height: 0;
  margin: 0 9px 10px 10px;
  display: flex;
  flex-direction: column;
  overflow: hidden;
  border-radius: 6px;
}
.container {
  width: 74%;
  margin: 0 auto;
}
.navbar {
  flex: none;
  height: 95px;
  background: #fff;
}
.bar {
  display: flex;
  align-items: flex-start;
  padding: 13px 19px 0 37px;
}
.brand {
  display: flex;
  align-items: flex-start;
}
.brand svg {
  margin-top: 6px;
}
.wordmark {
  display: flex;
  flex-direction: column;
  width: 148px;
  padding: 6px 0 0 9px;
  font-family: Roboto, sans-serif;
}
.wordmark b {
  color: #2573a7;
  font-size: 45px;
  line-height: 34px;
  font-weight: 800;
}
.wordmark i {
  margin-top: 5px;
  color: #4a4a4a;
  font-style: normal;
  font-weight: 700;
  font-size: 22px;
  line-height: 20px;
  letter-spacing: 3px;
}
.tagline {
  border-left: 2px solid #98989a;
  margin-left: 8px;
  padding-left: 12px;
  color: #4d4d4d;
  font-family: Roboto, sans-serif;
  font-size: 16px;
  line-height: 23px;
  white-space: nowrap;
}
.links {
  display: flex;
  align-items: center;
  gap: 29px;
  margin: 18px 0 0 48px;
  color: #2b2b2b;
  font: bold 16px/36px 'Liberation Sans', sans-serif;
}
.user {
  display: flex;
  margin: 6px 0 0 -4px;
}
.stores {
  display: flex;
  gap: 4px;
  margin: 6px 0 0 auto;
}
.store {
  width: 138px;
  height: 40px;
  display: flex;
  align-items: center;
  gap: 8px;
  padding: 0 0 2px 10px;
  border: 1px solid #8f8f8f;
  border-radius: 5px;
  background: #000;
  color: #fff;
}
.store span {
  display: flex;
  flex-direction: column;
}
.store small {
  font-size: 10px;
  line-height: 13px;
  white-space: nowrap;
}
.store strong {
  font-weight: 600;
  font-size: 18px;
  line-height: 20px;
  white-space: nowrap;
}
.store .google {
  font-weight: 500;
  font-size: 16px;
}
.page {
  flex: 1;
  min-height: 0;
  overflow: hidden;
  background: radial-gradient(circle farthest-corner at center, #4094d2, #0f3049);
  color: #fff;
}
h1 {
  margin: 0 0 56px;
  padding-top: 30px;
  text-align: center;
  font: 600 27px/32px Inter, sans-serif;
}
.filters {
  display: grid;
  grid-template-columns: 434fr 198fr 198fr 198fr 212fr;
  column-gap: 38px;
  row-gap: 21px;
  height: 229px;
  align-content: start;
  padding: 13px 0 0 12px;
  border: 1px solid #2c3e50;
  background: rgba(44, 62, 80, 0.45);
}
.first {
  grid-column: 1;
}
.field label {
  display: block;
  height: 35px;
  font: 18px/24px Inter, sans-serif;
  white-space: nowrap;
}
.control {
  position: relative;
}
.control select,
.control input {
  display: block;
  appearance: none;
  width: 100%;
  height: 45px;
  margin: 0;
  padding: 0 12px;
  border: 1px solid #ddd;
  border-radius: 4px;
  background: #fff;
  color: #333;
  opacity: 1;
  font: 15px 'Open Sans', sans-serif;
}
.disabled {
  opacity: 0.5;
}
.caret {
  position: absolute;
  right: 17px;
  top: 19px;
  fill: #333;
  pointer-events: none;
}
.calendar {
  position: absolute;
  right: 12px;
  top: 12px;
  display: flex;
}
.calendar svg {
  fill: #333;
}
.back {
  width: 80px;
  height: 45px;
  margin-top: 36px;
  display: flex;
  align-items: center;
  justify-content: center;
  border: 1px solid #ddd;
  border-radius: 4px;
  background: #fff;
}
.results {
  display: grid;
  grid-template-columns: 1044fr 324fr;
  gap: 37px;
  padding-top: 25px;
}
.tabs {
  display: flex;
  justify-content: flex-end;
}
.tabs button {
  display: flex;
  align-items: center;
  gap: 4px;
  height: 47px;
  padding: 0 20px;
  border-radius: 4px;
  font: 19px/24px Inter, sans-serif;
}
.tabs .active {
  background: #007bff;
}
.tabs svg {
  fill: #fff;
}
.map {
  position: relative;
}
.map svg {
  display: block;
  width: 100%;
}
.map path {
  vector-effect: non-scaling-stroke;
  stroke: #76926f;
  stroke-width: 1.3;
}
.land {
  fill: #fff;
}
.active-area {
  fill: #1e8449;
}
.border {
  fill: none;
}
.map .specks {
  fill: #76926f;
  stroke-width: 1;
}
.map .inner {
  stroke: none;
}
.legend {
  position: absolute;
  left: 32px;
  top: 352px;
}
.legend h2 {
  margin: 0;
  font: 300 20px/30px 'Open Sans', sans-serif;
}
.legend ul {
  display: flex;
  margin: 36px 0 0;
  padding: 0;
  list-style: none;
}
.legend li {
  width: 65px;
  text-align: center;
  font-size: 14px;
  line-height: 20px;
}
.legend i {
  display: block;
  height: 13px;
  margin-bottom: 6px;
  border: 1px solid rgba(80, 120, 160, 0.25);
}
aside {
  display: flex;
  flex-direction: column;
}
table {
  width: 100%;
  table-layout: fixed;
  border-collapse: collapse;
}
th {
  height: 52px;
  padding: 3px 9px 0;
  border-bottom: 1px solid #dee2e6;
  text-align: left;
  font: 14px/20px Inter, sans-serif;
}
th:first-child {
  width: 65%;
}
td {
  height: 42px;
  padding: 0 9px;
  background: rgba(44, 62, 80, 0.55);
  border-bottom: 1px solid #2c3e50;
  font-size: 16px;
  white-space: nowrap;
}
td:first-child {
  border-right: 1px solid #2c3e50;
}
.num {
  text-align: right;
}
.rule {
  flex: 1;
  width: 65%;
  border-right: 1px solid #dee2e6;
}
.taskbar {
  height: 59px;
  flex: none;
  display: grid;
  grid-template-columns: 1fr auto 1fr;
  align-items: center;
  border-top: 1px solid #3f3f3f;
  background: #1c1c1c;
  color: #fff;
}
.apps {
  grid-column: 2;
  display: flex;
  gap: 5px;
}
.apps button {
  position: relative;
  width: 50px;
  height: 50px;
  display: flex;
  align-items: center;
  justify-content: center;
  border-radius: 4px;
}
.open::after {
  content: '';
  position: absolute;
  bottom: 1px;
  left: 21px;
  width: 8px;
  height: 4px;
  border-radius: 2px;
  background: #959595;
}
.apps .current {
  background: #2b2b2b;
  border: 1px solid #343434;
}
.current::after {
  left: 14px;
  width: 20px;
}
.apps .alert {
  background: #84454b;
}
.alert::after {
  background: #ff94a2;
}
.badge {
  position: absolute;
  top: 4px;
  font-size: 13px;
  line-height: 18px;
}
.red {
  right: 4px;
  width: 18px;
  border-radius: 9px;
  background: #ee5058;
}
.grey {
  left: 24px;
  padding: 0 5px;
  border-radius: 9px;
  background: #8a8a8a;
  color: #111;
}
.tray {
  display: flex;
  justify-content: flex-end;
  align-items: center;
  padding-right: 26px;
}
.tray svg {
  fill: none;
  stroke: #fff;
  stroke-width: 1.5;
}
.net {
  margin-left: 23px;
}
.sound {
  margin-left: 9px;
}
.battery {
  margin-left: 10px;
}
.tray .faint {
  stroke: #666;
}
.clock {
  display: flex;
  flex-direction: column;
  align-items: flex-end;
  margin: 0 11px 0 23px;
  font-size: 14px;
  line-height: 20px;
}
.tray .bell {
  fill: #9d9d9d;
  stroke: none;
}
</style>
